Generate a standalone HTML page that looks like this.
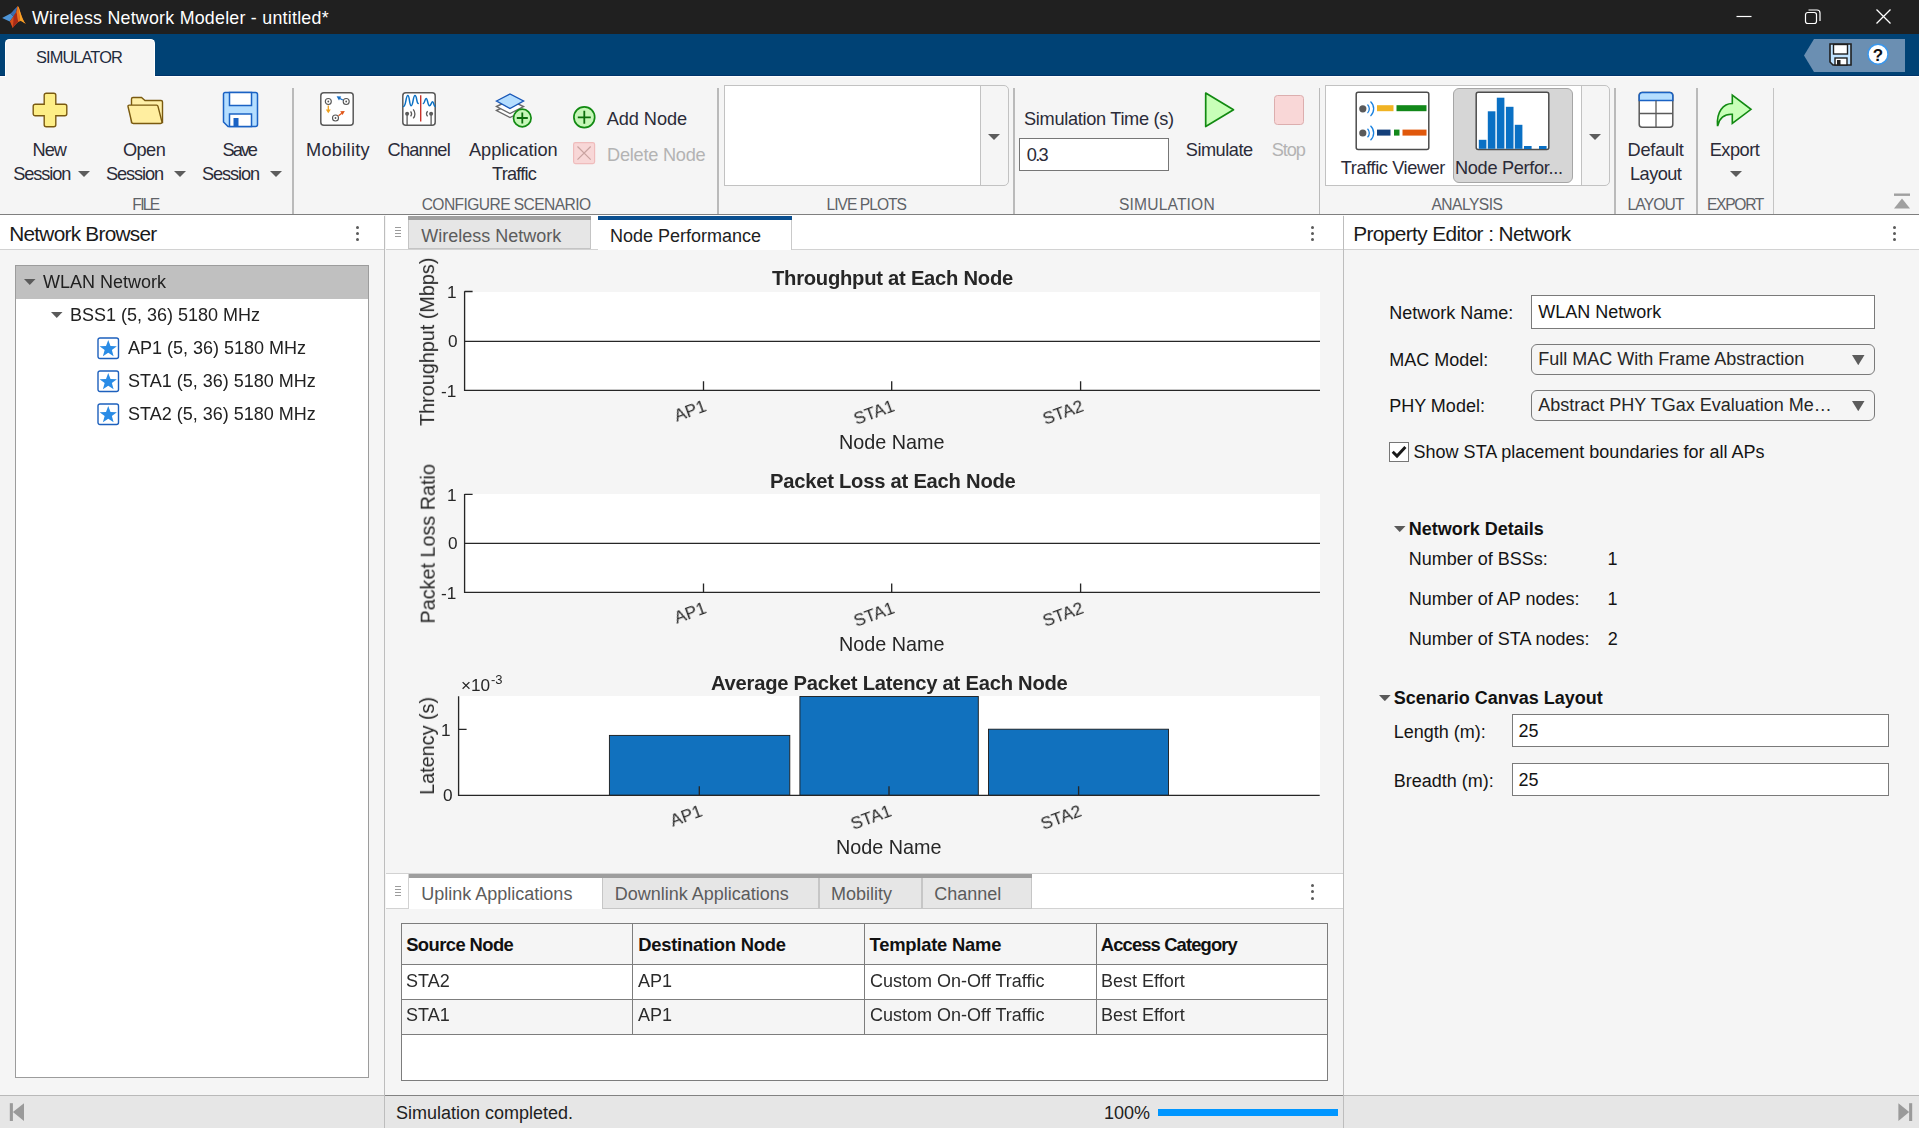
<!DOCTYPE html>
<html><head><meta charset="utf-8"><title>Wireless Network Modeler</title>
<style>
html,body{margin:0;padding:0;}
body{width:1919px;height:1128px;overflow:hidden;position:relative;background:#f5f5f5;font-family:"Liberation Sans",sans-serif;}
.b{position:absolute;box-sizing:border-box;display:block;}
.g{will-change:transform;}
.t{position:absolute;white-space:nowrap;line-height:1;font-family:"Liberation Sans",sans-serif;}
</style></head><body>
<div class="b" style="left:0px;top:0px;width:1919px;height:34px;background:#202020;"></div>
<svg class="b" style="left:0px;top:4px;" width="30" height="26" viewBox="0 0 30 26"><path d="M2.1 13.9L10.6 9.6L13.4 12.4L9.8 17.6Z" fill="#4d94d6"/>
<path d="M10.6 9.6C13 7.6 15.2 4.2 17.6 2.3L16.2 8.2L13.4 12.4Z" fill="#3b6db0"/>
<path d="M9.8 17.6L13.4 12.4L16.2 8.2L17.6 2.3C18.6 2.2 19.6 5.4 20.6 9C21.8 13 23.6 17.6 25.8 19.8C23.6 18.6 21.4 16.6 20 16.9C17.8 17.6 15.2 21.2 12.6 23.9C11.6 21.6 10.8 19.2 9.8 17.6Z" fill="#d8501c"/>
<path d="M17.6 2.3C18.6 2.2 19.6 5.4 20.6 9C21.8 13 23.6 17.6 25.8 19.8C23.6 18.6 21.6 16.8 20.2 16.9C19.6 12 18.8 6 17.6 2.3Z" fill="#f5a327"/>
<path d="M13.4 12.4L16.6 8C17.2 11.5 17.6 14.6 18.2 17.8C16.2 19.4 14.4 22 12.6 23.9C13.4 20 13.6 15.6 13.4 12.4Z" fill="#a82a18"/>
<path d="M16.6 8L17.6 2.3C18.6 6 19.4 11 20.2 16.9L18.2 17.8C17.6 14.6 17.2 11.5 16.6 8Z" fill="#e8731f"/></svg>
<div class="t" style="left:32.00px;top:9.73px;font-size:17.8px;color:#ffffff;letter-spacing:0.257px;">Wireless Network Modeler - untitled*</div>
<svg class="b" style="left:1730px;top:4px;" width="170" height="26" viewBox="0 0 170 26"><path d="M6.5 12.5H21.5" stroke="#fff" stroke-width="1.2" fill="none"/>
<rect x="75.5" y="8.5" width="11" height="11" rx="2.2" fill="none" stroke="#fff" stroke-width="1.2"/>
<path d="M78.5 6 H87 a3 3 0 0 1 3 3 V17" fill="none" stroke="#fff" stroke-width="1.2"/>
<path d="M146.5 5.5L160.5 19.5M160.5 5.5L146.5 19.5" stroke="#fff" stroke-width="1.3" fill="none"/></svg>
<div class="b" style="left:0px;top:34px;width:1919px;height:42px;background:#004275;"></div>
<div class="b" style="left:0px;top:75px;width:1919px;height:1px;background:#00336a;"></div>
<div class="b" style="left:0px;top:76px;width:1919px;height:1px;background:#ffffff;"></div>
<div class="b" style="left:5px;top:39px;width:150px;height:38px;background:#f5f5f5;border-radius:4.5px 4.5px 0 0;border:1px solid #fff;border-bottom:none;"></div>
<div class="t" style="left:36.00px;top:48.92px;font-size:16.4px;color:#1f2b3d;letter-spacing:-0.906px;">SIMULATOR</div>
<svg class="b" style="left:1800px;top:38px;" width="110" height="36" viewBox="0 0 110 36"><path d="M4 17.5L14 1H105V34H14Z" fill="#6b8fb2"/>
<g transform="translate(29,5)"><path d="M1 1H22V22H4L1 19Z" fill="#bfe2ff" stroke="#1f1f1f" stroke-width="1.6"/><rect x="4.5" y="1.5" width="14" height="9.5" fill="#fff" stroke="#1f1f1f" stroke-width="1.4"/><rect x="6" y="15" width="12" height="7" fill="#fff" stroke="#1f1f1f" stroke-width="1.4"/><rect x="8" y="17" width="3.5" height="5" fill="#1f1f1f"/></g>
<circle cx="78" cy="16.2" r="10" fill="#fff" stroke="#3a97ec" stroke-width="1.5"/></svg>
<div class="t" style="left:1872.80px;top:47.41px;font-size:17px;color:#111;font-weight:bold;">?</div>
<div class="b" style="left:0px;top:77px;width:1919px;height:137px;background:#f5f5f5;"></div>
<div class="b" style="left:0px;top:214px;width:1919px;height:1px;background:#7f7f7f;"></div>
<div class="b" style="left:292.0px;top:88px;width:1.6px;height:126px;background:#bababa;"></div>
<div class="b" style="left:717.2px;top:88px;width:1.6px;height:126px;background:#bababa;"></div>
<div class="b" style="left:1013.2px;top:88px;width:1.6px;height:126px;background:#bababa;"></div>
<div class="b" style="left:1318.5px;top:88px;width:1.6px;height:126px;background:#bababa;"></div>
<div class="b" style="left:1614.2px;top:88px;width:1.6px;height:126px;background:#bababa;"></div>
<div class="b" style="left:1696.0px;top:88px;width:1.6px;height:126px;background:#bababa;"></div>
<div class="b" style="left:1773px;top:88px;width:1px;height:126px;background:#c4c4c4;"></div>
<svg class="b" style="left:32px;top:92px;" width="36" height="36" viewBox="0 0 36 36"><path d="M14.2 1.2H21.8 a2 2 0 0 1 2 2V12.2H32.8 a2 2 0 0 1 2 2V21.8 a2 2 0 0 1 -2 2H23.8V32.8 a2 2 0 0 1 -2 2H14.2 a2 2 0 0 1 -2 -2V23.8H3.2 a2 2 0 0 1 -2 -2V14.2 a2 2 0 0 1 2 -2H12.2V3.2 a2 2 0 0 1 2 -2Z" fill="#fdee86" stroke="#7a5a10" stroke-width="1.4"/></svg>
<div class="t" style="left:32.50px;top:141.09px;font-size:18.2px;color:#2b2b38;letter-spacing:-1.000px;">New</div>
<div class="t" style="left:13.30px;top:165.09px;font-size:18.2px;color:#2b2b38;letter-spacing:-1.100px;">Session</div>
<svg class="b" style="left:78px;top:171px;" width="12" height="6" viewBox="0 0 12 6"><path d="M0 0H12L6.0 6Z" fill="#5c5c5c"/></svg>
<svg class="b" style="left:126px;top:94px;" width="40" height="32" viewBox="0 0 40 32"><path d="M5.5 28.5V5 a1.5 1.5 0 0 1 1.5 -1.5H15.5L19 6.5H35 a1.5 1.5 0 0 1 1.5 1.5V28.5Z" fill="#fff0a8" stroke="#7a5a10" stroke-width="1.4"/>
<path d="M2 12.5 a1.2 1.2 0 0 1 1.2 -1.4H30.5 a1.5 1.5 0 0 1 1.5 1.2L36 28 a1.5 1.5 0 0 1 -1.5 1.5H7.5 a1.8 1.8 0 0 1 -1.8 -1.3Z" fill="#ffeea0" stroke="#7a5a10" stroke-width="1.4"/></svg>
<div class="t" style="left:123.00px;top:141.09px;font-size:18.2px;color:#2b2b38;letter-spacing:-0.583px;">Open</div>
<div class="t" style="left:106.00px;top:165.09px;font-size:18.2px;color:#2b2b38;letter-spacing:-1.083px;">Session</div>
<svg class="b" style="left:174px;top:171px;" width="12" height="6" viewBox="0 0 12 6"><path d="M0 0H12L6.0 6Z" fill="#5c5c5c"/></svg>
<svg class="b" style="left:222px;top:91px;" width="37" height="37" viewBox="0 0 37 37"><path d="M3 1.5H33.5 a2 2 0 0 1 2 2V33.5 a2 2 0 0 1 -2 2H6L1.5 31V3 a1.5 1.5 0 0 1 1.5 -1.5Z" fill="#b5deff" stroke="#1a62c4" stroke-width="1.5"/>
<rect x="7.5" y="1.5" width="22" height="13" fill="#fff" stroke="#1a62c4" stroke-width="1.5"/>
<rect x="7.5" y="23" width="22" height="12.5" fill="#fff" stroke="#1a62c4" stroke-width="1.5"/>
<rect x="11.5" y="27" width="5" height="8.5" fill="#1a62c4"/></svg>
<div class="t" style="left:222.50px;top:141.09px;font-size:18.2px;color:#2b2b38;letter-spacing:-2.000px;">Save</div>
<div class="t" style="left:202.00px;top:165.09px;font-size:18.2px;color:#2b2b38;letter-spacing:-1.083px;">Session</div>
<svg class="b" style="left:270px;top:171px;" width="12" height="6" viewBox="0 0 12 6"><path d="M0 0H12L6.0 6Z" fill="#5c5c5c"/></svg>
<div class="t" style="left:132.30px;top:197.49px;font-size:15.6px;color:#5f6368;letter-spacing:-1.683px;">FILE</div>
<svg class="b" style="left:320px;top:92px;" width="34" height="34" viewBox="0 0 34 34"><rect x="0.8" y="0.8" width="32.4" height="32.4" rx="3" fill="#fff" stroke="#5a5a5a" stroke-width="1.5"/>
<g fill="none" stroke="#555" stroke-width="1.1"><circle cx="8.3" cy="9.5" r="3"/><circle cx="26.2" cy="9.5" r="3"/><circle cx="15.5" cy="26" r="3"/></g>
<g fill="#555"><circle cx="8.3" cy="9.5" r="0.9"/><circle cx="26.2" cy="9.5" r="0.9"/><circle cx="15.5" cy="26" r="0.9"/></g>
<path d="M8.3 13.5V18.5" stroke="#f0a21e" stroke-width="1.3"/><path d="M5.8 17.5H10.8L8.3 21.2Z" fill="#f0a21e"/>
<path d="M22.8 8L19.5 6.2" stroke="#1a6fc4" stroke-width="1.3"/><path d="M16.6 4.3L21.2 4.6L19 8.4Z" fill="#1a6fc4"/>
<path d="M18.5 23.8L21.8 21.3" stroke="#e0561a" stroke-width="1.3"/><path d="M20.2 19.2L24.8 19L22.6 23Z" fill="#e0561a"/></svg>
<div class="t" style="left:306.00px;top:141.09px;font-size:18.2px;color:#2b2b38;letter-spacing:0.286px;">Mobility</div>
<svg class="b" style="left:402px;top:92px;" width="34" height="34" viewBox="0 0 34 34"><rect x="0.8" y="0.8" width="32.4" height="32.4" rx="3" fill="#fff" stroke="#5a5a5a" stroke-width="1.5"/>
<path d="M18.7 3.2V29.6" stroke="#c8322a" stroke-width="1.4"/>
<path d="M1.6 14.4C4 14.4 3.8 3.6 5.8 3.6S7.2 13.8 9.2 13.8S11 3.6 13 3.6S14.4 11 16.2 11.4" fill="none" stroke="#0a70c4" stroke-width="1.5" stroke-linecap="round"/>
<path d="M21.4 11.4C22.8 11.2 22.8 6.4 24.2 6.4S25.8 13.8 27.4 13.8S29.4 9.8 30.6 9.8S31.6 13.8 33 14.4" fill="none" stroke="#0a70c4" stroke-width="1.5" stroke-linecap="round"/>
<g stroke="#5a5a5a" fill="none" stroke-width="1.3"><path d="M5.1 22V33"/><path d="M29.1 22V33"/>
<path d="M8.6 19.4a4 4 0 0 1 0 5"/><path d="M11.2 17.4a6.8 6.8 0 0 1 0 9"/><path d="M25.6 19.2a4 4 0 0 0 0 5.2"/></g>
<circle cx="5.1" cy="21.7" r="2" fill="#5a5a5a"/><circle cx="29.1" cy="21.7" r="2" fill="#5a5a5a"/></svg>
<div class="t" style="left:387.50px;top:141.09px;font-size:18.2px;color:#2b2b38;letter-spacing:-0.750px;">Channel</div>
<svg class="b" style="left:495px;top:92px;" width="38" height="37" viewBox="0 0 38 37"><path d="M1.5 18.5L15 12L28.5 18.5L15 25.5Z" fill="#fff" stroke="#6a6a6a" stroke-width="1.4"/>
<path d="M1.5 14.5L15 8L28.5 14.5L15 21.5Z" fill="#fff" stroke="#6a6a6a" stroke-width="1.4"/>
<path d="M1.5 9L15 2L28.5 9L15 16.5Z" fill="#b5deff" stroke="#1857b8" stroke-width="1.4"/>
<circle cx="27.3" cy="26" r="8.8" fill="#c6f7b8" stroke="#128a12" stroke-width="1.7"/>
<path d="M27.3 20.5V31.5M21.8 26H32.8" stroke="#0c6e0c" stroke-width="1.8"/></svg>
<div class="t" style="left:469.00px;top:141.09px;font-size:18.2px;color:#2b2b38;letter-spacing:-0.025px;">Application</div>
<div class="t" style="left:492.00px;top:165.09px;font-size:18.2px;color:#2b2b38;letter-spacing:-0.792px;">Traffic</div>
<svg class="b" style="left:572px;top:105px;" width="25" height="25" viewBox="0 0 25 25"><circle cx="12.3" cy="12.3" r="10.4" fill="#c6f7b8" stroke="#128a12" stroke-width="1.7"/><path d="M12.3 5.8V18.8M5.8 12.3H18.8" stroke="#0c6e0c" stroke-width="1.8"/></svg>
<div class="t" style="left:606.70px;top:110.09px;font-size:18.2px;color:#2b2b38;letter-spacing:-0.064px;">Add Node</div>
<svg class="b" style="left:572px;top:141px;" width="25" height="25" viewBox="0 0 25 25"><rect x="1.6" y="1.6" width="21" height="21" rx="1.8" fill="#f8d7d7" stroke="#efbcbc" stroke-width="1.2"/><path d="M5.5 5.5L18.7 18.7M18.7 5.5L5.5 18.7" stroke="#c9a3a0" stroke-width="1.2"/></svg>
<div class="t" style="left:607.00px;top:145.99px;font-size:18.2px;color:#b3b3b3;letter-spacing:-0.250px;">Delete Node</div>
<div class="t" style="left:421.70px;top:197.49px;font-size:15.6px;color:#5f6368;letter-spacing:-0.585px;">CONFIGURE SCENARIO</div>
<div class="b" style="left:724px;top:85px;width:285px;height:101px;background:#f5f5f5;border:1px solid #c2c2c2;border-radius:0 5px 5px 0;"></div>
<div class="b" style="left:724px;top:85px;width:257px;height:101px;background:#fff;border:1px solid #c2c2c2;"></div>
<svg class="b" style="left:988px;top:134px;" width="12" height="6" viewBox="0 0 12 6"><path d="M0 0H12L6.0 6Z" fill="#5c5c5c"/></svg>
<div class="t" style="left:826.50px;top:197.49px;font-size:15.6px;color:#5f6368;letter-spacing:-0.972px;">LIVE PLOTS</div>
<div class="t" style="left:1024.00px;top:110.09px;font-size:18.2px;color:#2b2b38;letter-spacing:-0.308px;">Simulation Time (s)</div>
<div class="b" style="left:1019px;top:138px;width:150.3px;height:33px;background:#fff;border:1px solid #767676;"></div>
<div class="t" style="left:1026.70px;top:146.09px;font-size:18.2px;color:#2b2b38;letter-spacing:-1.625px;">0.3</div>
<svg class="b" style="left:1203px;top:90px;" width="34" height="40" viewBox="0 0 34 40"><path d="M2.7 3L30.5 19.8L2.7 36.5Z" fill="#c8ffb8" stroke="#128a12" stroke-width="1.7" stroke-linejoin="round"/></svg>
<div class="t" style="left:1185.80px;top:141.09px;font-size:18.2px;color:#2b2b38;letter-spacing:-0.500px;">Simulate</div>
<div class="b" style="left:1274px;top:95px;width:29.8px;height:30px;background:#f9d7d7;border:1px solid #dcaeae;border-radius:3.5px;"></div>
<div class="t" style="left:1271.70px;top:141.09px;font-size:18.2px;color:#b3b3b3;letter-spacing:-1.067px;">Stop</div>
<div class="t" style="left:1119.00px;top:197.49px;font-size:15.6px;color:#5f6368;letter-spacing:0.167px;">SIMULATION</div>
<div class="b" style="left:1325px;top:85px;width:285px;height:101px;background:#f5f5f5;border:1px solid #c2c2c2;border-radius:0 5px 5px 0;"></div>
<div class="b" style="left:1325px;top:85px;width:257px;height:101px;background:#fff;border:1px solid #c2c2c2;"></div>
<svg class="b" style="left:1589px;top:134px;" width="12" height="6" viewBox="0 0 12 6"><path d="M0 0H12L6.0 6Z" fill="#5c5c5c"/></svg>
<svg class="b" style="left:1355px;top:91px;" width="76" height="60" viewBox="0 0 76 60"><rect x="1.2" y="1.2" width="72.6" height="57.2" rx="2" fill="#fff" stroke="#4d4d4d" stroke-width="1.5"/>
<circle cx="7.8" cy="17.8" r="3.6" fill="#5a5a5a"/><circle cx="7.8" cy="42" r="3.6" fill="#5a5a5a"/>
<g fill="none" stroke="#1a82e0" stroke-width="1.3"><path d="M12.5 13.5a6 6 0 0 1 0 8.6"/><path d="M15.5 10.5a10 10 0 0 1 0 14.6"/><path d="M12.5 37.7a6 6 0 0 1 0 8.6"/><path d="M15.5 34.7a10 10 0 0 1 0 14.6"/></g>
<rect x="22" y="14.2" width="16.5" height="6" fill="#f0b323"/><rect x="41.5" y="14.2" width="30" height="6" fill="#12881a"/>
<rect x="22" y="38.6" width="13.5" height="6" fill="#14407a"/><rect x="39" y="38.6" width="5.5" height="6" fill="#12881a"/><rect x="47.5" y="38.6" width="24" height="6" fill="#e0580c"/></svg>
<div class="t" style="left:1340.80px;top:159.29px;font-size:18.2px;color:#2b2b38;letter-spacing:-0.404px;">Traffic Viewer</div>
<div class="b" style="left:1453px;top:88px;width:120px;height:95px;background:#d6d6d6;border:1px solid #a6a6a6;border-radius:6px;"></div>
<svg class="b" style="left:1475px;top:91px;" width="76" height="60" viewBox="0 0 76 60"><rect x="1.2" y="1.2" width="72.6" height="57.2" rx="2" fill="#fff" stroke="#4d4d4d" stroke-width="1.5"/>
<g fill="#0a70c4"><rect x="3.8" y="48.8" width="7.6" height="9"/><rect x="12.8" y="20.3" width="7.6" height="37.5"/><rect x="21.8" y="6.7" width="7.6" height="51"/><rect x="30.9" y="15.8" width="7.6" height="42"/><rect x="39.8" y="33.8" width="7.6" height="24"/><rect x="49" y="55" width="7.6" height="3"/><rect x="64" y="55" width="7.6" height="3"/></g></svg>
<div class="t" style="left:1455.00px;top:159.29px;font-size:18.2px;color:#2b2b38;letter-spacing:-0.323px;">Node Perfor...</div>
<div class="t" style="left:1431.50px;top:197.49px;font-size:15.6px;color:#5f6368;letter-spacing:-0.536px;">ANALYSIS</div>
<svg class="b" style="left:1637.5px;top:91px;" width="37" height="38" viewBox="0 0 37 38"><rect x="1.2" y="1.6" width="33.6" height="34.6" rx="3" fill="#fff" stroke="#5a5a5a" stroke-width="1.5"/>
<path d="M1.2 9.6V4.6a3 3 0 0 1 3 -3H31.8a3 3 0 0 1 3 3V9.6Z" fill="#b5deff" stroke="#1a62c4" stroke-width="1.5"/>
<path d="M18 9.6V36M1.2 22.5H34.8" stroke="#5a5a5a" stroke-width="1.3"/></svg>
<div class="t" style="left:1627.50px;top:141.09px;font-size:18.2px;color:#2b2b38;letter-spacing:-0.208px;">Default</div>
<div class="t" style="left:1630.00px;top:165.09px;font-size:18.2px;color:#2b2b38;letter-spacing:-0.550px;">Layout</div>
<div class="t" style="left:1627.50px;top:197.49px;font-size:15.6px;color:#5f6368;letter-spacing:-0.850px;">LAYOUT</div>
<svg class="b" style="left:1715px;top:92px;" width="39" height="36" viewBox="0 0 39 36"><path d="M2.5 33.5C1.5 20 8 11.5 17.3 11.5V3.2L36 17.3L17.3 31.5V22.3C10 22 4.5 26 2.8 33.5Z" fill="#c8ffb8" stroke="#128a12" stroke-width="1.6" stroke-linejoin="miter"/></svg>
<div class="t" style="left:1709.70px;top:141.09px;font-size:18.2px;color:#2b2b38;letter-spacing:-0.490px;">Export</div>
<svg class="b" style="left:1730px;top:171px;" width="12" height="6" viewBox="0 0 12 6"><path d="M0 0H12L6.0 6Z" fill="#5c5c5c"/></svg>
<div class="t" style="left:1707.00px;top:197.49px;font-size:15.6px;color:#5f6368;letter-spacing:-1.300px;">EXPORT</div>
<svg class="b" style="left:1893px;top:193px;" width="18" height="17" viewBox="0 0 18 17"><rect x="1" y="0.5" width="16" height="2.4" fill="#a0a0a0"/><path d="M1 15.5H17L9 5.5Z" fill="#a0a0a0"/></svg>
<div class="b" style="left:0px;top:215px;width:384px;height:34px;background:#fff;"></div>
<div class="b" style="left:0px;top:249px;width:384px;height:1px;background:#d2d2d2;"></div>
<div class="b" style="left:384px;top:216px;width:1px;height:879px;background:#bdbdbd;"></div>
<div class="t" style="left:9.20px;top:223.89px;font-size:20.8px;color:#1a1a1a;letter-spacing:-0.736px;">Network Browser</div>
<div class="b" style="left:356.4px;top:225.5px;width:3px;height:3px;border-radius:50%;background:#5a5a5a;"></div>
<div class="b" style="left:356.4px;top:231.5px;width:3px;height:3px;border-radius:50%;background:#5a5a5a;"></div>
<div class="b" style="left:356.4px;top:237.5px;width:3px;height:3px;border-radius:50%;background:#5a5a5a;"></div>
<div class="b" style="left:15px;top:265px;width:354px;height:813px;background:#fff;border:1px solid #9c9c9c;"></div>
<div class="b" style="left:16px;top:266px;width:352px;height:32.6px;background:#c0c0c0;"></div>
<svg class="b" style="left:24px;top:279px;" width="11.5" height="6" viewBox="0 0 11.5 6"><path d="M0 0H11.5L5.75 6Z" fill="#5a5a5a"/></svg>
<svg class="b" style="left:51px;top:312px;" width="11.5" height="6" viewBox="0 0 11.5 6"><path d="M0 0H11.5L5.75 6Z" fill="#5a5a5a"/></svg>
<svg class="b" style="left:96.5px;top:336.5px;" width="23" height="23" viewBox="0 0 23 23"><rect x="1" y="1" width="20.5" height="20.5" rx="2" fill="#fff" stroke="#1d60bd" stroke-width="1.4"/><path d="M11.25 2.9L13.5 8.9L19.9 9.15L14.85 13.1L16.6 19.3L11.25 15.7L5.9 19.3L7.65 13.1L2.6 9.15L9 8.9Z" fill="#2a8ce6"/></svg>
<svg class="b" style="left:96.5px;top:369.5px;" width="23" height="23" viewBox="0 0 23 23"><rect x="1" y="1" width="20.5" height="20.5" rx="2" fill="#fff" stroke="#1d60bd" stroke-width="1.4"/><path d="M11.25 2.9L13.5 8.9L19.9 9.15L14.85 13.1L16.6 19.3L11.25 15.7L5.9 19.3L7.65 13.1L2.6 9.15L9 8.9Z" fill="#2a8ce6"/></svg>
<svg class="b" style="left:96.5px;top:402.5px;" width="23" height="23" viewBox="0 0 23 23"><rect x="1" y="1" width="20.5" height="20.5" rx="2" fill="#fff" stroke="#1d60bd" stroke-width="1.4"/><path d="M11.25 2.9L13.5 8.9L19.9 9.15L14.85 13.1L16.6 19.3L11.25 15.7L5.9 19.3L7.65 13.1L2.6 9.15L9 8.9Z" fill="#2a8ce6"/></svg>
<div class="b" style="left:386px;top:215px;width:957px;height:34px;background:#fff;"></div>
<div class="b" style="left:386px;top:249px;width:957px;height:1px;background:#d2d2d2;"></div>
<div class="b" style="left:395px;top:227px;width:6px;height:1px;background:#9c9c9c;"></div>
<div class="b" style="left:395px;top:230px;width:6px;height:1px;background:#9c9c9c;"></div>
<div class="b" style="left:395px;top:233px;width:6px;height:1px;background:#9c9c9c;"></div>
<div class="b" style="left:395px;top:236px;width:6px;height:1px;background:#9c9c9c;"></div>
<div class="b" style="left:408px;top:216px;width:183px;height:33px;background:#e6e6e6;border:1px solid #c4c4c4;border-top:none;"></div>
<div class="b" style="left:408px;top:216px;width:183px;height:4px;background:#a0a0a0;"></div>
<div class="t" style="left:421.30px;top:227.00px;font-size:18.0px;color:#5c5c5c;">Wireless Network</div>
<div class="b" style="left:597.5px;top:216px;width:194px;height:34px;background:#fff;border-right:1px solid #cacaca;"></div>
<div class="b" style="left:597.5px;top:216px;width:194px;height:4px;background:#0a4f8f;"></div>
<div class="t" style="left:610.00px;top:227.00px;font-size:18.0px;color:#212121;">Node Performance</div>
<div class="b" style="left:1310.5px;top:225.5px;width:3px;height:3px;border-radius:50%;background:#5a5a5a;"></div>
<div class="b" style="left:1310.5px;top:231.5px;width:3px;height:3px;border-radius:50%;background:#5a5a5a;"></div>
<div class="b" style="left:1310.5px;top:237.5px;width:3px;height:3px;border-radius:50%;background:#5a5a5a;"></div>
<div class="b" style="left:1343px;top:216px;width:1px;height:879px;background:#bdbdbd;"></div>
<div class="b" style="left:0px;top:1095px;width:1919px;height:33px;background:#e6e6e6;border-top:1px solid #b9b9b9;"></div>
<div class="b" style="left:385px;top:1095px;width:958px;height:1px;background:#828282;"></div>
<div class="b" style="left:384px;top:1095px;width:1px;height:33px;background:#bdbdbd;"></div>
<div class="b" style="left:1343px;top:1095px;width:1px;height:33px;background:#bdbdbd;"></div>
<div class="t" style="left:396.00px;top:1104.00px;font-size:18.0px;color:#212121;">Simulation completed.</div>
<div class="t" style="left:1104.00px;top:1104.00px;font-size:18.0px;color:#212121;">100%</div>
<div class="b" style="left:1157.7px;top:1108.8px;width:180.2px;height:7.2px;background:#0096ff;"></div>
<svg class="b" style="left:8px;top:1101px;" width="18" height="22" viewBox="0 0 18 22"><rect x="1.8" y="2.2" width="3.1" height="17.8" fill="#9a9a9a"/><path d="M16 2.2V20L4.9 11.1Z" fill="#9a9a9a"/></svg>
<svg class="b" style="left:1896px;top:1101px;" width="18" height="22" viewBox="0 0 18 22"><rect x="13.1" y="2.2" width="3.1" height="17.8" fill="#9a9a9a"/><path d="M2.4 2.2V20L13.2 11.1Z" fill="#9a9a9a"/></svg>
<div class="b" style="left:464.6px;top:291.5px;width:855.4px;height:98.80000000000001px;background:#fff;"></div>
<svg class="b" style="left:0;top:0;" width="1919" height="1128"><path d="M464.6 291.2V390.3H1320M464.6 341.4H1320M464.6 291.5h8M703.5 390.3v-9M891.7 390.3v-9M1080.6 390.3v-9" fill="none" stroke="#262626" stroke-width="1.33"/></svg>
<div class="b" style="left:464.6px;top:494.3px;width:855.4px;height:98.09999999999997px;background:#fff;"></div>
<svg class="b" style="left:0;top:0;" width="1919" height="1128"><path d="M464.6 494.0V592.4H1320M464.6 543.4H1320M464.6 494.3h8M703.5 592.4v-9M891.7 592.4v-9M1080.6 592.4v-9" fill="none" stroke="#262626" stroke-width="1.33"/></svg>
<div class="b" style="left:458.6px;top:696.3px;width:861.1px;height:99.0px;background:#fff;"></div>
<svg class="b" style="left:0;top:0;" width="1919" height="1128"><rect x="609.4" y="735.4" width="180.39999999999998" height="59.89999999999998" fill="#1171be" stroke="#1a1a1a" stroke-width="0.9"/><rect x="799.9" y="696.5" width="178.39999999999998" height="98.79999999999995" fill="#1171be" stroke="#1a1a1a" stroke-width="0.9"/><rect x="988.5" y="729.2" width="180.0" height="66.09999999999991" fill="#1171be" stroke="#1a1a1a" stroke-width="0.9"/><path d="M458.6 696.3V795.3H1319.7M458.6 729.4h8M699.3 795.3v-9M889 795.3v-9M1078.6 795.3v-9" fill="none" stroke="#262626" stroke-width="1.33"/></svg>
<div class="b" style="left:386px;top:873px;width:957px;height:1px;background:#d2d2d2;"></div>
<div class="b" style="left:386px;top:874px;width:957px;height:34px;background:#fff;"></div>
<div class="b" style="left:386px;top:907.5px;width:957px;height:1px;background:#d2d2d2;"></div>
<div class="b" style="left:386px;top:874px;width:22.5px;height:34.5px;background:#fff;border-right:1px solid #d2d2d2;border-bottom:1px solid #d2d2d2;"></div>
<div class="b" style="left:395px;top:886px;width:6px;height:1px;background:#9c9c9c;"></div>
<div class="b" style="left:395px;top:889px;width:6px;height:1px;background:#9c9c9c;"></div>
<div class="b" style="left:395px;top:892px;width:6px;height:1px;background:#9c9c9c;"></div>
<div class="b" style="left:395px;top:895px;width:6px;height:1px;background:#9c9c9c;"></div>
<div class="b" style="left:408.5px;top:874px;width:193.5px;height:35px;background:#fff;"></div>
<div class="b" style="left:408.5px;top:874px;width:193.5px;height:4px;background:#9e9e9e;"></div>
<div class="t" style="left:421.30px;top:884.96px;font-size:18.0px;color:#5c5c5c;">Uplink Applications</div>
<div class="b" style="left:602.3px;top:874px;width:216.9000000000001px;height:34.5px;background:#e6e6e6;border:1px solid #c6c6c6;border-top:none;"></div>
<div class="b" style="left:602.3px;top:874px;width:216.9000000000001px;height:4px;background:#9e9e9e;"></div>
<div class="t" style="left:614.70px;top:884.96px;font-size:18.0px;color:#5c5c5c;">Downlink Applications</div>
<div class="b" style="left:819.2px;top:874px;width:102.79999999999995px;height:34.5px;background:#e6e6e6;border:1px solid #c6c6c6;border-top:none;"></div>
<div class="b" style="left:819.2px;top:874px;width:102.79999999999995px;height:4px;background:#9e9e9e;"></div>
<div class="t" style="left:830.90px;top:884.96px;font-size:18.0px;color:#5c5c5c;">Mobility</div>
<div class="b" style="left:922px;top:874px;width:109.70000000000005px;height:34.5px;background:#e6e6e6;border:1px solid #c6c6c6;border-top:none;"></div>
<div class="b" style="left:922px;top:874px;width:109.70000000000005px;height:4px;background:#9e9e9e;"></div>
<div class="t" style="left:934.20px;top:884.96px;font-size:18.0px;color:#5c5c5c;">Channel</div>
<div class="b" style="left:1310.5px;top:883.5px;width:3px;height:3px;border-radius:50%;background:#5a5a5a;"></div>
<div class="b" style="left:1310.5px;top:890.0px;width:3px;height:3px;border-radius:50%;background:#5a5a5a;"></div>
<div class="b" style="left:1310.5px;top:896.5px;width:3px;height:3px;border-radius:50%;background:#5a5a5a;"></div>
<div class="b" style="left:401px;top:923px;width:927px;height:157.5px;background:#fff;border:1px solid #7d7d7d;"></div>
<div class="b" style="left:402px;top:924px;width:925px;height:40px;background:#f5f5f5;"></div>
<div class="b" style="left:402px;top:999.5px;width:925px;height:34px;background:#f5f5f5;"></div>
<div class="b" style="left:401px;top:964px;width:927px;height:1px;background:#7d7d7d;"></div>
<div class="b" style="left:401px;top:999px;width:927px;height:1px;background:#7d7d7d;"></div>
<div class="b" style="left:401px;top:1033.5px;width:927px;height:1px;background:#7d7d7d;"></div>
<div class="b" style="left:632.3px;top:923px;width:1px;height:111.5px;background:#7d7d7d;"></div>
<div class="b" style="left:864px;top:923px;width:1px;height:111.5px;background:#7d7d7d;"></div>
<div class="b" style="left:1095.5px;top:923px;width:1px;height:111.5px;background:#7d7d7d;"></div>
<div class="t" style="left:406.20px;top:935.62px;font-size:18.4px;color:#111;letter-spacing:-0.580px;font-weight:bold;">Source Node</div>
<div class="t" style="left:638.20px;top:935.62px;font-size:18.4px;color:#111;letter-spacing:-0.233px;font-weight:bold;">Destination Node</div>
<div class="t" style="left:869.60px;top:935.62px;font-size:18.4px;color:#111;letter-spacing:-0.233px;font-weight:bold;">Template Name</div>
<div class="t" style="left:1100.80px;top:935.62px;font-size:18.4px;color:#111;letter-spacing:-0.875px;font-weight:bold;">Access Category</div>
<div class="b" style="left:1344px;top:215px;width:575px;height:34px;background:#fff;"></div>
<div class="b" style="left:1344px;top:249px;width:575px;height:1px;background:#d2d2d2;"></div>
<div class="t" style="left:1353.20px;top:223.89px;font-size:20.8px;color:#1a1a1a;letter-spacing:-0.596px;">Property Editor : Network</div>
<div class="b" style="left:1892.5px;top:225.5px;width:3px;height:3px;border-radius:50%;background:#5a5a5a;"></div>
<div class="b" style="left:1892.5px;top:231.5px;width:3px;height:3px;border-radius:50%;background:#5a5a5a;"></div>
<div class="b" style="left:1892.5px;top:237.5px;width:3px;height:3px;border-radius:50%;background:#5a5a5a;"></div>
<div class="t" style="left:1389.20px;top:304.00px;font-size:18.0px;color:#141414;">Network Name:</div>
<div class="b" style="left:1531px;top:295px;width:344px;height:34px;background:#fff;border:1px solid #7a7a7a;"></div>
<div class="t" style="left:1538.30px;top:303.00px;font-size:18.0px;color:#141414;">WLAN Network</div>
<div class="t" style="left:1389.20px;top:351.00px;font-size:18.0px;color:#141414;">MAC Model:</div>
<div class="b" style="left:1531px;top:344.3px;width:344px;height:30.7px;background:#f5f5f5;border:1px solid #7a7a7a;border-radius:6px;"></div>
<div class="t" style="left:1538.30px;top:350.00px;font-size:18.0px;color:#262626;">Full MAC With Frame Abstraction</div>
<svg class="b" style="left:1852px;top:354.5px;" width="12.5" height="10.5" viewBox="0 0 12.5 10.5"><path d="M0 0H12.5L6.25 10.2Z" fill="#5c5c5c"/></svg>
<div class="t" style="left:1389.20px;top:397.00px;font-size:18.0px;color:#141414;">PHY Model:</div>
<div class="b" style="left:1531px;top:390.3px;width:344px;height:30.7px;background:#f5f5f5;border:1px solid #7a7a7a;border-radius:6px;"></div>
<div class="t" style="left:1538.30px;top:396.00px;font-size:18.0px;color:#262626;">Abstract PHY TGax Evaluation Me…</div>
<svg class="b" style="left:1852px;top:400.5px;" width="12.5" height="10.5" viewBox="0 0 12.5 10.5"><path d="M0 0H12.5L6.25 10.2Z" fill="#5c5c5c"/></svg>
<div class="b" style="left:1389.3px;top:442.3px;width:19.7px;height:19.3px;background:#fff;border:1px solid #767676;"></div>
<svg class="b" style="left:1389.3px;top:442.3px;" width="20" height="20" viewBox="0 0 20 20"><path d="M3.7 9.8L8 14.1L16.4 4.9" fill="none" stroke="#1a1a1a" stroke-width="2.9"/></svg>
<div class="t" style="left:1413.60px;top:443.00px;font-size:18.0px;color:#141414;">Show STA placement boundaries for all APs</div>
<svg class="b" style="left:1394.3px;top:526px;" width="11.5" height="6.1" viewBox="0 0 11.5 6.1"><path d="M0 0H11.5L5.75 6.1Z" fill="#5a5a5a"/></svg>
<div class="t" style="left:1408.80px;top:520.00px;font-size:18.0px;color:#111;font-weight:bold;">Network Details</div>
<div class="t" style="left:1408.80px;top:550.00px;font-size:18.0px;color:#141414;">Number of BSSs:</div>
<div class="t" style="left:1607.60px;top:550.00px;font-size:18.0px;color:#141414;">1</div>
<div class="t" style="left:1408.80px;top:590.00px;font-size:18.0px;color:#141414;">Number of AP nodes:</div>
<div class="t" style="left:1607.60px;top:590.00px;font-size:18.0px;color:#141414;">1</div>
<div class="t" style="left:1408.80px;top:630.00px;font-size:18.0px;color:#141414;">Number of STA nodes:</div>
<div class="t" style="left:1607.70px;top:630.00px;font-size:18.0px;color:#141414;">2</div>
<svg class="b" style="left:1379.1px;top:694.9px;" width="11.7" height="6.2" viewBox="0 0 11.7 6.2"><path d="M0 0H11.7L5.85 6.2Z" fill="#5a5a5a"/></svg>
<div class="t" style="left:1393.70px;top:689.00px;font-size:18.0px;color:#111;font-weight:bold;">Scenario Canvas Layout</div>
<div class="t" style="left:1393.70px;top:723.00px;font-size:18.0px;color:#141414;">Length (m):</div>
<div class="b" style="left:1512px;top:714.2px;width:377px;height:32.6px;background:#fff;border:1px solid #7a7a7a;"></div>
<div class="t" style="left:1518.60px;top:722.00px;font-size:18.0px;color:#141414;">25</div>
<div class="t" style="left:1393.70px;top:772.00px;font-size:18.0px;color:#141414;">Breadth (m):</div>
<div class="b" style="left:1512px;top:763px;width:377px;height:33px;background:#fff;border:1px solid #7a7a7a;"></div>
<div class="t" style="left:1518.60px;top:771.00px;font-size:18.0px;color:#141414;">25</div>
<div class="t g" style="left:43.30px;top:273.46px;font-size:18.0px;color:#212121;">WLAN Network</div>
<div class="t g" style="left:70.30px;top:306.46px;font-size:18.0px;color:#212121;">BSS1 (5, 36) 5180 MHz</div>
<div class="t g" style="left:128.40px;top:339.36px;font-size:18.0px;color:#212121;">AP1 (5, 36) 5180 MHz</div>
<div class="t g" style="left:128.40px;top:372.36px;font-size:18.0px;color:#212121;">STA1 (5, 36) 5180 MHz</div>
<div class="t g" style="left:128.40px;top:405.36px;font-size:18.0px;color:#212121;">STA2 (5, 36) 5180 MHz</div>
<div class="t g" style="left:772.21px;top:267.70px;font-size:20.2px;color:#262626;letter-spacing:-0.251px;font-weight:bold;">Throughput at Each Node</div>
<div class="t g" style="left:446.80px;top:284.44px;font-size:17.2px;color:#262626;">1</div>
<div class="t g" style="left:448.10px;top:332.74px;font-size:17.2px;color:#262626;">0</div>
<div class="t g" style="left:441.05px;top:383.24px;font-size:17.2px;color:#262626;">-1</div>
<div class="t g" style="left:344.20px;top:331.50px;font-size:19.8px;color:#262626;transform-origin:84.00px 50%;transform:rotate(-90deg);">Throughput (Mbps)</div>
<div class="t g" style="left:673.20px;top:396.70px;font-size:17.2px;color:#262626;transform-origin:32.50px 50%;transform:rotate(-20deg);">AP1</div>
<div class="t g" style="left:852.15px;top:396.70px;font-size:17.2px;color:#262626;transform-origin:41.75px 50%;transform:rotate(-20deg);">STA1</div>
<div class="t g" style="left:1041.05px;top:396.70px;font-size:17.2px;color:#262626;transform-origin:41.75px 50%;transform:rotate(-20deg);">STA2</div>
<div class="t g" style="left:839.45px;top:433.04px;font-size:19.8px;color:#262626;">Node Name</div>
<div class="t g" style="left:769.96px;top:470.50px;font-size:20.2px;color:#262626;letter-spacing:-0.240px;font-weight:bold;">Packet Loss at Each Node</div>
<div class="t g" style="left:446.80px;top:487.24px;font-size:17.2px;color:#262626;">1</div>
<div class="t g" style="left:448.10px;top:534.74px;font-size:17.2px;color:#262626;">0</div>
<div class="t g" style="left:441.05px;top:585.34px;font-size:17.2px;color:#262626;">-1</div>
<div class="t g" style="left:348.57px;top:533.50px;font-size:19.8px;color:#262626;transform-origin:79.62px 50%;transform:rotate(-90deg);">Packet Loss Ratio</div>
<div class="t g" style="left:673.20px;top:598.80px;font-size:17.2px;color:#262626;transform-origin:32.50px 50%;transform:rotate(-20deg);">AP1</div>
<div class="t g" style="left:852.15px;top:598.80px;font-size:17.2px;color:#262626;transform-origin:41.75px 50%;transform:rotate(-20deg);">STA1</div>
<div class="t g" style="left:1041.05px;top:598.80px;font-size:17.2px;color:#262626;transform-origin:41.75px 50%;transform:rotate(-20deg);">STA2</div>
<div class="t g" style="left:839.45px;top:635.14px;font-size:19.8px;color:#262626;">Node Name</div>
<div class="t g" style="left:711.06px;top:672.80px;font-size:20.2px;color:#262626;letter-spacing:-0.241px;font-weight:bold;">Average Packet Latency at Each Node</div>
<div class="t g" style="left:440.80px;top:722.24px;font-size:17.2px;color:#262626;">1</div>
<div class="t g" style="left:442.50px;top:786.84px;font-size:17.2px;color:#262626;">0</div>
<div class="t g" style="left:461.00px;top:676.84px;font-size:17.2px;color:#262626;">×10</div>
<div class="t g" style="left:490.50px;top:673.20px;font-size:13px;color:#262626;">-3</div>
<div class="t g" style="left:379.32px;top:736.10px;font-size:19.8px;color:#262626;transform-origin:48.88px 50%;transform:rotate(-90deg);">Latency (s)</div>
<div class="t g" style="left:669.00px;top:801.70px;font-size:17.2px;color:#262626;transform-origin:32.50px 50%;transform:rotate(-20deg);">AP1</div>
<div class="t g" style="left:849.45px;top:801.70px;font-size:17.2px;color:#262626;transform-origin:41.75px 50%;transform:rotate(-20deg);">STA1</div>
<div class="t g" style="left:1039.05px;top:801.70px;font-size:17.2px;color:#262626;transform-origin:41.75px 50%;transform:rotate(-20deg);">STA2</div>
<div class="t g" style="left:836.25px;top:838.14px;font-size:19.8px;color:#262626;">Node Name</div>
<div class="t g" style="left:406.20px;top:971.96px;font-size:18.0px;color:#2b2b2b;">STA2</div>
<div class="t g" style="left:638.00px;top:971.96px;font-size:18.0px;color:#2b2b2b;">AP1</div>
<div class="t g" style="left:869.60px;top:971.96px;font-size:18.0px;color:#2b2b2b;">Custom On-Off Traffic</div>
<div class="t g" style="left:1100.80px;top:971.96px;font-size:18.0px;color:#2b2b2b;">Best Effort</div>
<div class="t g" style="left:406.20px;top:1005.86px;font-size:18.0px;color:#2b2b2b;">STA1</div>
<div class="t g" style="left:638.00px;top:1005.86px;font-size:18.0px;color:#2b2b2b;">AP1</div>
<div class="t g" style="left:869.60px;top:1005.86px;font-size:18.0px;color:#2b2b2b;">Custom On-Off Traffic</div>
<div class="t g" style="left:1100.80px;top:1005.86px;font-size:18.0px;color:#2b2b2b;">Best Effort</div>
</body></html>
